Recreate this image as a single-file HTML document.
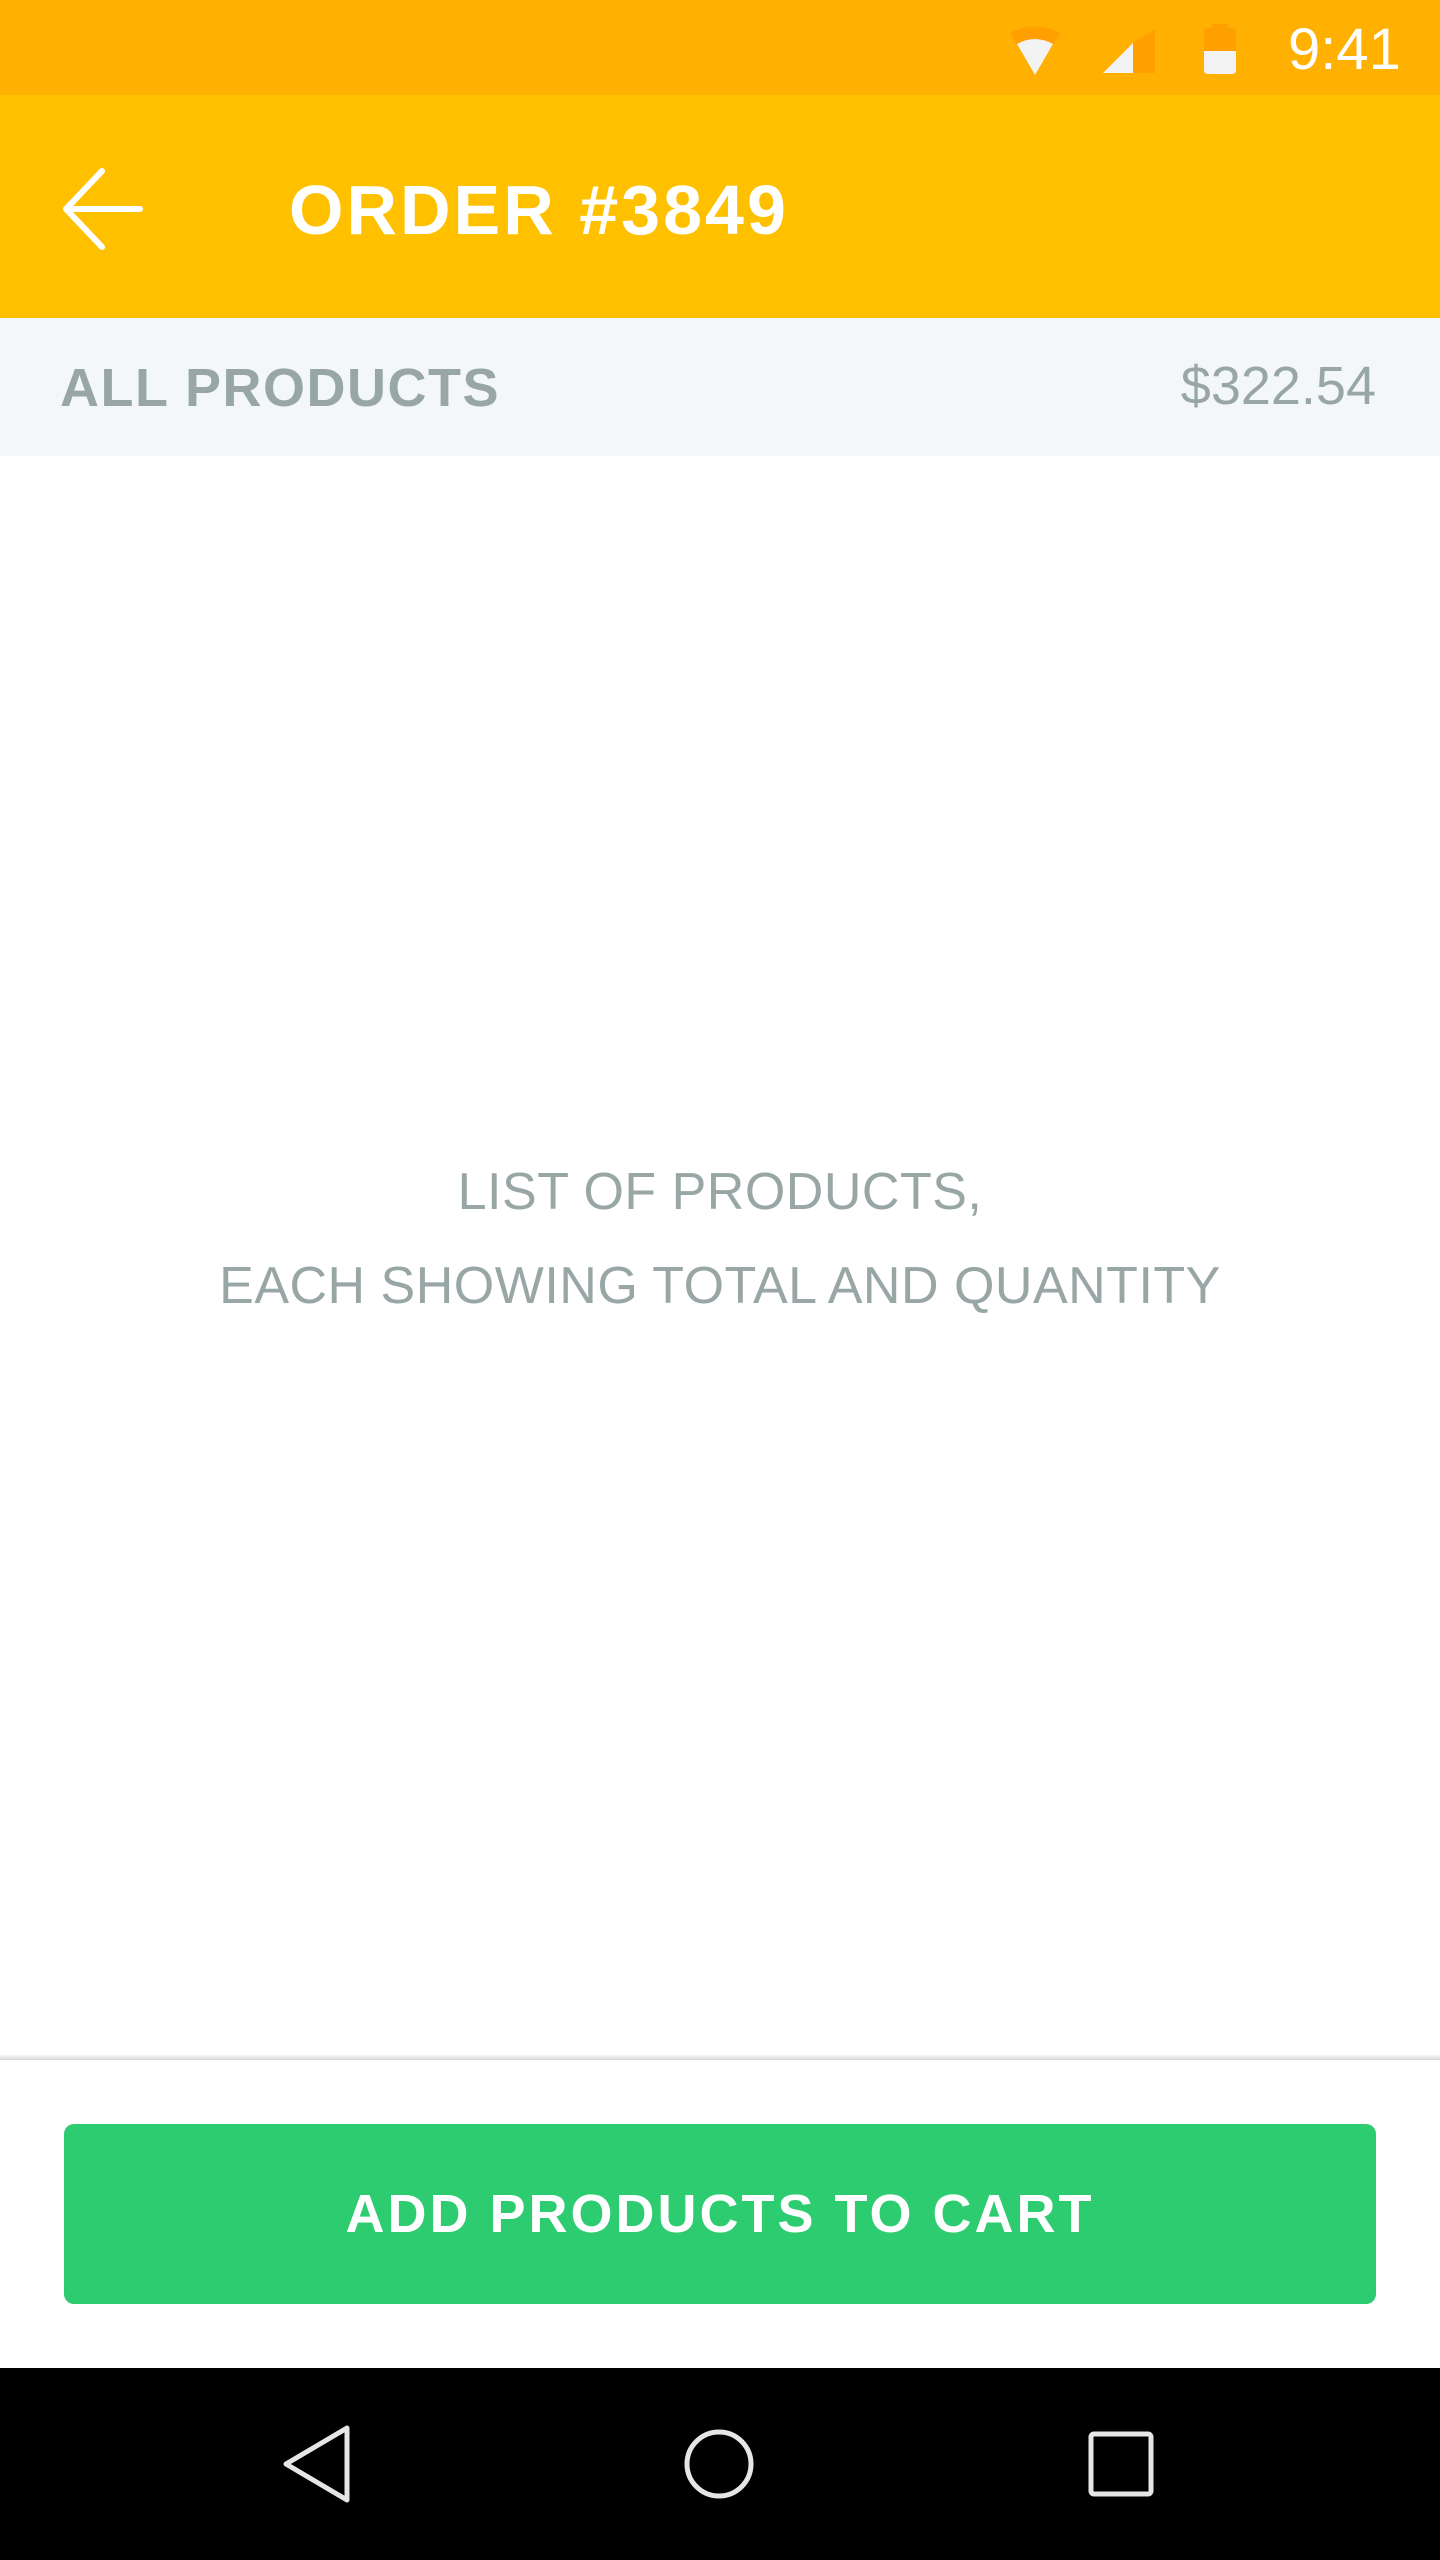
<!DOCTYPE html>
<html><head><meta charset="utf-8"><style>
*{margin:0;padding:0;box-sizing:border-box}
body{width:1440px;height:2560px;position:relative;overflow:hidden;background:#fff;font-family:"Liberation Sans",sans-serif}
.a{position:absolute}
</style></head><body>
<div class="a" style="left:0;top:0;width:1440px;height:95px;background:#FFB000"></div>
<svg class="a" style="left:1000px;top:20px" width="250" height="60" viewBox="0 0 250 60">
<path d="M10 13 Q35 0 60 13 L35 55 Z" fill="#FF9F00"/>
<path d="M17 24 Q35 14 53 24 L35 55 Z" fill="#F3F3F3"/>
<path d="M103 53 L133 53 L133 23 Z" fill="#F3F3F3"/>
<path d="M133 53 L155 53 L155 9 L133 23 Z" fill="#FF9F00"/>
<rect x="204" y="8" width="32" height="46" rx="4" fill="#FF9F00"/>
<rect x="212" y="4" width="16" height="6" fill="#FF9F00"/>
<path d="M204 31 H236 V50 Q236 54 232 54 H208 Q204 54 204 50Z" fill="#F3F3F3"/>
</svg>
<div class="a" style="left:1288px;top:16px;font-size:58px;color:#fff;line-height:68px">9:41</div>
<div class="a" style="left:0;top:95px;width:1440px;height:223px;background:#FFC000"></div>
<svg class="a" style="left:60px;top:165px" width="90" height="90" viewBox="0 0 90 90">
<path d="M42 6 L6 44 L42 82 M6 44 H80" fill="none" stroke="#fff" stroke-width="6" stroke-linecap="round" stroke-linejoin="round"/>
</svg>
<div class="a" style="left:289px;top:170px;font-size:70px;font-weight:bold;color:#fff;letter-spacing:3px;line-height:80px">ORDER #3849</div>
<div class="a" style="left:0;top:318px;width:1440px;height:138px;background:#F3F7FA"></div>
<div class="a" style="left:60px;top:356px;font-size:54px;font-weight:bold;color:#98A6A6;letter-spacing:1.5px;line-height:64px">ALL PRODUCTS</div>
<div class="a" style="right:64px;top:354px;font-size:54px;color:#98A6A6;line-height:64px">$322.54</div>
<div class="a" style="left:0;width:1440px;top:1145px;text-align:center;font-size:52px;color:#98A6A6;line-height:94px;letter-spacing:0.5px">LIST OF PRODUCTS,<br>EACH SHOWING TOTAL AND QUANTITY</div>
<div class="a" style="left:0;top:2054px;width:1440px;height:6px;background:linear-gradient(#fff,#d6d6d6)"></div>
<div class="a" style="left:64px;top:2124px;width:1312px;height:180px;background:#2ECC71;border-radius:10px;color:#fff;font-size:54px;font-weight:bold;letter-spacing:3px;text-align:center;line-height:180px">ADD PRODUCTS TO CART</div>
<div class="a" style="left:0;top:2368px;width:1440px;height:192px;background:#000"></div>
<svg class="a" style="left:0;top:2368px" width="1440" height="192">
<path d="M347 60 L286 96 L347 132 Z" fill="none" stroke="#E6E6E6" stroke-width="5" stroke-linejoin="round"/>
<circle cx="719" cy="96" r="32" fill="none" stroke="#E6E6E6" stroke-width="5"/>
<rect x="1091" y="66" width="60" height="60" rx="3" fill="none" stroke="#E6E6E6" stroke-width="5"/>
</svg>
</body></html>
